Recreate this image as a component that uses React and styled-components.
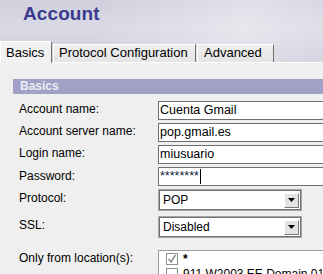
import React from "react";
import styled, { createGlobalStyle } from "styled-components";

const Global = createGlobalStyle`
  html, body { margin: 0; padding: 0; background: #efefef; }
  body { font-family: "Liberation Sans", Arial, sans-serif; }
`;

const Page = styled.div`
  width: 323px;
  height: 274px;
  overflow: hidden;
  background: #efefef;
  font-family: "Liberation Sans", Arial, sans-serif;
  font-size: 12px;
  color: #000;
`;

const Header = styled.div`
  height: 62px;
  display: flex;
  flex-direction: column;
  justify-content: space-between;
  background:
    linear-gradient(100deg, rgba(255,255,255,0) 30%, rgba(255,255,255,0.35) 75%, rgba(255,255,255,0.15) 100%),
    linear-gradient(180deg, #d0d0de 0%, #dadae5 45%, #cdcddc 100%);
`;

const Title = styled.h1`
  margin: 0;
  padding: 3px 0 0 23px;
  font-size: 19px;
  line-height: 22px;
  font-weight: bold;
  color: #3a3a8e;
  letter-spacing: 0.1px;
`;

const TabStrip = styled.div`
  display: flex;
  align-items: flex-end;
  height: 22px;
`;

const Tab = styled.div`
  box-sizing: border-box;
  width: ${(p) => p.$w}px;
  height: ${(p) => (p.$active ? 22 : 18)}px;
  margin-bottom: ${(p) => (p.$active ? -1 : 0)}px;
  margin-right: 1px;
  position: relative;
  z-index: ${(p) => (p.$active ? 1 : 0)};
  display: flex;
  align-items: flex-end;
  padding: 0 0 ${(p) => (p.$active ? 3 : 2)}px ${(p) => p.$pl}px;
  border-top: 1px solid #ffffff;
  border-left: 1px solid #ffffff;
  border-right: 1px solid #6f6f6f;
  background: ${(p) =>
    p.$active ? "#f1f1f1" : "linear-gradient(180deg, #efefef 0%, #e4e4e4 100%)"};
  font-size: 13px;
  line-height: 15px;
  color: #000;
  white-space: nowrap;
`;

const Panel = styled.div`
  border-top: 1px solid #ffffff;
  padding-top: 16px;
  background: #efefef;
`;

const SectionBar = styled.div`
  margin-left: 13px;
  height: 15px;
  padding-left: 7px;
  background: #a1a1c5;
  color: #ececf4;
  font-weight: bold;
  font-size: 12px;
  line-height: 15px;
`;

const Form = styled.div`
  padding-left: 19px;
  padding-top: 7px;
`;

const Row = styled.div`
  display: grid;
  grid-template-columns: 139px 1fr;
  align-items: start;
  margin-top: ${(p) => p.$gap}px;
`;

const Label = styled.div`
  padding-top: ${(p) => p.$pt}px;
  font-size: 12px;
  line-height: 14px;
  white-space: nowrap;
`;

const Field = styled.div`
  box-sizing: border-box;
  width: 200px;
  height: 19px;
  border: 1px solid #6e6e6e;
  background: #ffffff;
  padding: 0 1px;
  font-size: 12.5px;
  line-height: 17px;
  color: ${(p) => (p.$secret ? "#0c1a3a" : "#000")};
  white-space: nowrap;
  display: flex;
  align-items: center;
`;

const Caret = styled.span`
  display: inline-block;
  width: 1px;
  height: 15px;
  margin-left: 1px;
  background: #000;
`;

const Select = styled.div`
  box-sizing: border-box;
  width: 144px;
  height: 22px;
  border: 1px solid #a6a6a6;
  box-shadow: inset 0 0 0 1px #707070;
  background: #ffffff;
  display: flex;
  align-items: center;
  justify-content: space-between;
  padding: 0 2px 0 4px;
  font-size: 12px;
`;

const DropButton = styled.div`
  box-sizing: border-box;
  width: 15px;
  height: 15px;
  background: #e3e3e3;
  border-top: 1px solid #ffffff;
  border-left: 1px solid #ffffff;
  border-right: 1px solid #7a7a7a;
  border-bottom: 1px solid #7a7a7a;
  display: flex;
  align-items: center;
  justify-content: center;
`;

const ListBox = styled.div`
  box-sizing: border-box;
  width: 200px;
  height: 60px;
  border: 1px solid #9c9c9c;
  background: #ffffff;
  padding: 2px 0 0 7px;
`;

const ListItem = styled.div`
  display: flex;
  align-items: flex-start;
  height: 15px;
  gap: 5px;
  white-space: nowrap;
`;

const Check = styled.div`
  box-sizing: border-box;
  width: 12px;
  height: 12px;
  border: 1px solid #8f8f8f;
  background: #ffffff;
  flex: none;
  display: flex;
  align-items: center;
  justify-content: center;
`;

const ItemText = styled.span`
  font-size: 12px;
  line-height: 13px;
  font-weight: ${(p) => (p.$bold ? "bold" : "normal")};
`;

const Arrow = () => (
  <svg width="7" height="4" viewBox="0 0 7 4">
    <path d="M0 0H7L3.5 4Z" fill="#000" />
  </svg>
);

const Tick = () => (
  <svg width="10" height="10" viewBox="0 0 10 10">
    <path d="M1.5 5 L4 8 L8.5 1" fill="none" stroke="#8a8a8a" strokeWidth="1.4" />
  </svg>
);

export default function App() {
  return (
    <Page>
      <Global />
      <Header>
        <Title>Account</Title>
        <TabStrip>
          <Tab $active $w={52} $pl={5}>Basics</Tab>
          <Tab $w={143} $pl={5}>Protocol Configuration</Tab>
          <Tab $w={77} $pl={6}>Advanced</Tab>
        </TabStrip>
      </Header>
      <Panel>
        <SectionBar>Basics</SectionBar>
        <Form>
          <Row $gap={0}>
            <Label $pt={1}>Account name:</Label>
            <Field>Cuenta Gmail</Field>
          </Row>
          <Row $gap={3}>
            <Label $pt={1}>Account server name:</Label>
            <Field>pop.gmail.es</Field>
          </Row>
          <Row $gap={3}>
            <Label $pt={1}>Login name:</Label>
            <Field>miusuario</Field>
          </Row>
          <Row $gap={3}>
            <Label $pt={2}>Password:</Label>
            <Field $secret>
              ********<Caret />
            </Field>
          </Row>
          <Row $gap={3}>
            <Label $pt={2}>Protocol:</Label>
            <Select>
              <span>POP</span>
              <DropButton><Arrow /></DropButton>
            </Select>
          </Row>
          <Row $gap={5}>
            <Label $pt={2}>SSL:</Label>
            <Select>
              <span>Disabled</span>
              <DropButton><Arrow /></DropButton>
            </Select>
          </Row>
          <Row $gap={12}>
            <Label $pt={1}>Only from location(s):</Label>
            <ListBox>
              <ListItem>
                <Check><Tick /></Check>
                <ItemText $bold>*</ItemText>
              </ListItem>
              <ListItem>
                <Check />
                <ItemText>911 W2003 EE Domain 01</ItemText>
              </ListItem>
            </ListBox>
          </Row>
        </Form>
      </Panel>
    </Page>
  );
}
